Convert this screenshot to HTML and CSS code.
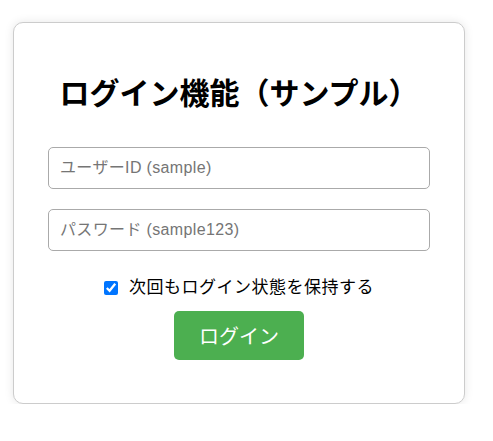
FILE: index.html
```html
<!DOCTYPE html>
<html lang="ja">
<head>
<meta charset="utf-8">
<title>ログイン機能（サンプル）</title>
<link rel="stylesheet" href="styles.css">
</head>
<body>
<div class="page">
  <div class="card">
    <h2 class="title">ログイン機能（サンプル）</h2>
    <form class="form">
      <input class="field" type="text" placeholder="ユーザーID (sample)">
      <input class="field" type="password" placeholder="パスワード (sample123)">
      <label class="remember"><input class="check" type="checkbox" checked>次回もログイン状態を保持する</label>
      <button class="btn" type="button">ログイン</button>
    </form>
  </div>
</div>
</body>
</html>
```
FILE: styles.css
```css
html, body {
  margin: 0;
  background: #fff;
}
body {
  font-family: "Liberation Sans", Arial, "Noto Sans CJK JP", sans-serif;
  color: #000;
}
.page {
  padding: 22px 0 0 13px;
}
.card {
  width: 452px;
  box-sizing: border-box;
  border: 1px solid #ccc;
  border-radius: 10px;
  box-shadow: 0 0 10px rgba(0, 0, 0, 0.1);
  background: #fff;
  padding: 48px 34px 43px 34px;
}
.title {
  margin: 0 0 36px 0;
  font-size: 30px;
  line-height: 40px;
  font-weight: bold;
  text-align: center;
  font-family: "Noto Sans CJK JP", sans-serif;
}
.form {
  display: flex;
  flex-direction: column;
  gap: 20px;
  margin: 0;
}
.field {
  height: 42px;
  box-sizing: border-box;
  width: 100%;
  border: 1px solid #aaa;
  border-radius: 5px;
  padding: 0 11px;
  font-size: 16px;
  letter-spacing: 0.35px;
  font-family: "Liberation Sans", Arial, "Noto Sans CJK JP", sans-serif;
  outline: none;
}
.field::placeholder {
  color: #757575;
}
.remember {
  display: flex;
  align-items: center;
  justify-content: center;
  font-size: 17px;
  letter-spacing: 0.5px;
  line-height: 23px;
  margin-top: 5px;
  margin-bottom: -8px;
}
.check {
  width: 14px;
  height: 14px;
  margin: 0 11px 0 0;
}
.btn {
  align-self: center;
  width: 130px;
  height: 49px;
  border: none;
  border-radius: 5px;
  background: #4caf50;
  color: #fff;
  font-size: 20px;
  font-family: "Liberation Sans", Arial, "Noto Sans CJK JP", sans-serif;
  padding: 0;
}
```
